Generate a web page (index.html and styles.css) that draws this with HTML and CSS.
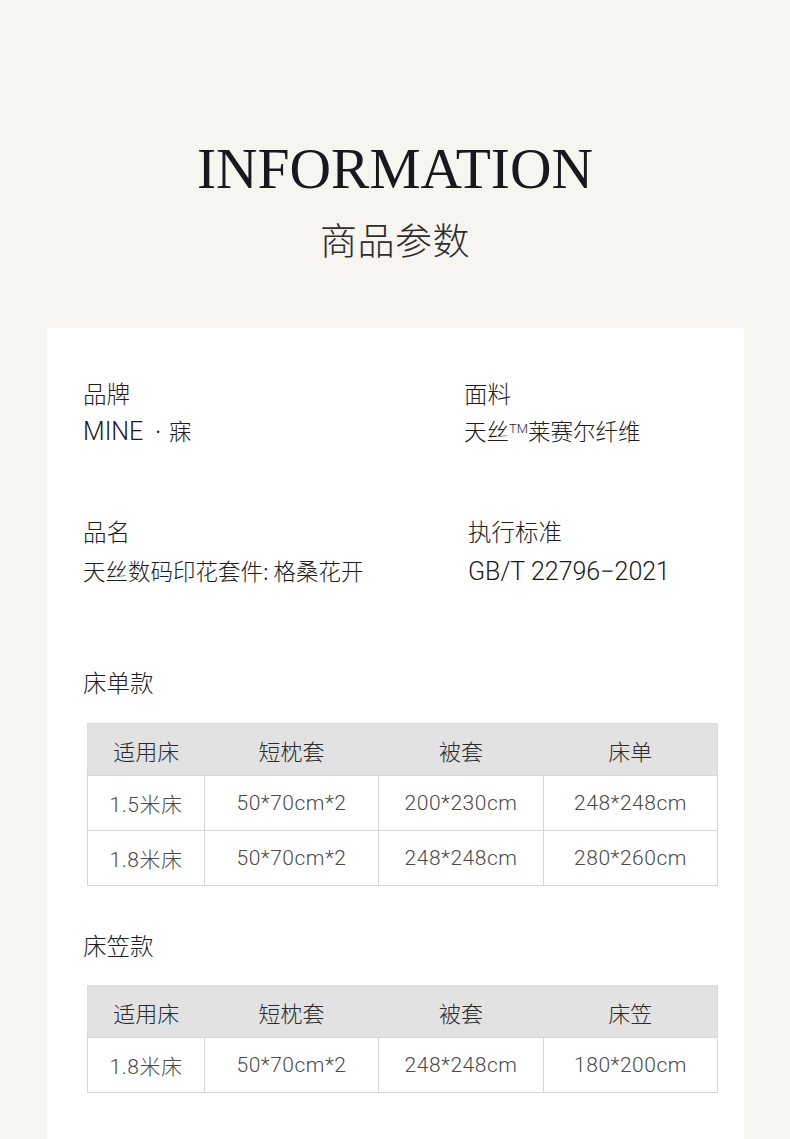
FILE: index.html
```html
<!DOCTYPE html>
<html lang="zh-CN">
<head>
<meta charset="utf-8">
<title>INFORMATION 商品参数</title>
<link rel="stylesheet" href="styles.css">
</head>
<body>
<header class="hero">
  <h1 class="hero-title">INFORMATION</h1>
  <h2 class="hero-sub">商品参数</h2>
</header>
<main class="card">
  <section class="info">
    <div class="info-item">
      <div class="info-label">品牌</div>
      <div class="info-value"><span class="latin">MINE</span><span class="dot">·</span>寐</div>
    </div>
    <div class="info-item">
      <div class="info-label">面料</div>
      <div class="info-value">天丝<span class="tm">TM</span>莱赛尔纤维</div>
    </div>
    <div class="info-item info-item--second">
      <div class="info-label">品名</div>
      <div class="info-value">天丝数码印花套件: 格桑花开</div>
    </div>
    <div class="info-item info-item--second info-item--shift">
      <div class="info-label">执行标准</div>
      <div class="info-value"><span class="latin">GB/T 22796−2021</span></div>
    </div>
  </section>

  <h3 class="section-title section-title--first">床单款</h3>
  <table class="spec">
    <colgroup><col class="c1"><col class="c2"><col class="c3"><col class="c4"></colgroup>
    <thead>
      <tr><th>适用床</th><th>短枕套</th><th>被套</th><th>床单</th></tr>
    </thead>
    <tbody>
      <tr><td>1.5米床</td><td>50*70cm*2</td><td>200*230cm</td><td>248*248cm</td></tr>
      <tr><td>1.8米床</td><td>50*70cm*2</td><td>248*248cm</td><td>280*260cm</td></tr>
    </tbody>
  </table>

  <h3 class="section-title">床笠款</h3>
  <table class="spec">
    <colgroup><col class="c1"><col class="c2"><col class="c3"><col class="c4"></colgroup>
    <thead>
      <tr><th>适用床</th><th>短枕套</th><th>被套</th><th>床笠</th></tr>
    </thead>
    <tbody>
      <tr><td>1.8米床</td><td>50*70cm*2</td><td>248*248cm</td><td>180*200cm</td></tr>
    </tbody>
  </table>
</main>
</body>
</html>
```

FILE: styles.css
```css
* { box-sizing: border-box; }

html, body {
  margin: 0;
  padding: 0;
}

body {
  background: #f6f5f0;
  font-family: "Roboto", "Noto Sans CJK SC", sans-serif;
  color: #222;
  width: 790px;
  min-height: 1139px;
  overflow: hidden;
}

.hero {
  padding-top: 137px;
  text-align: center;
}

.hero-title {
  margin: 0;
  font-family: "Liberation Serif", "Times New Roman", serif;
  font-weight: 400;
  font-size: 57.5px;
  line-height: 64px;
  color: #18181e;
}

.hero-sub {
  margin: 17px 0 0;
  font-family: "Noto Sans CJK SC", sans-serif;
  font-weight: 300;
  font-size: 37px;
  line-height: 42px;
  color: #2e2e2e;
  letter-spacing: 0.5px;
}

.card {
  margin: 68px 46px 0 47px;
  background: #fff;
  padding: 50px 36px 60px;
  min-height: 820px;
}

.info {
  display: grid;
  grid-template-columns: 381px 1fr;
  row-gap: 68px;
}

.info-item--shift {
  padding-left: 4px;
}

.info-item--second .info-value {
  margin-top: 9px;
}

.info-label {
  font-family: "Noto Sans CJK SC", sans-serif;
  font-weight: 300;
  font-size: 23.5px;
  line-height: 30px;
  color: #1e1e1e;
}

.info-value {
  margin-top: 7px;
  font-family: "Noto Sans CJK SC", sans-serif;
  font-weight: 300;
  font-size: 22.5px;
  line-height: 30px;
  color: #1e1e1e;
  white-space: nowrap;
}

.latin {
  font-family: "Roboto", "Noto Sans CJK SC", sans-serif;
  font-weight: 300;
  font-size: 25px;
  color: #1a1a1a;
}

.dot {
  font-family: "Roboto", sans-serif;
  font-weight: 400;
  font-size: 22px;
  margin: 0 8px 0 12px;
}

.tm {
  font-family: "Roboto", sans-serif;
  font-size: 13px;
  vertical-align: 7px;
  line-height: 0;
}

.section-title {
  margin: 44px 0 25px;
  font-family: "Noto Sans CJK SC", sans-serif;
  font-weight: 300;
  font-size: 23.5px;
  line-height: 30px;
  color: #1e1e1e;
}

.section-title--first {
  margin-top: 80px;
  margin-bottom: 26px;
}

.spec {
  margin-left: 4px;
  width: 630px;
  border-collapse: collapse;
  table-layout: fixed;
  border: 1px solid #dcdcdc;
}

.spec .c1 { width: 117px; }
.spec .c2 { width: 174px; }
.spec .c3 { width: 165px; }
.spec .c4 { width: 174px; }

.spec th {
  height: 52px;
  padding: 0;
  background: #e2e2e2;
  font-family: "Noto Sans CJK SC", sans-serif;
  font-weight: 300;
  font-size: 22px;
  color: #2a2a2a;
  text-align: center;
}

.spec td {
  height: 55px;
  padding: 0;
  border: 1px solid #d6d6d6;
  font-family: "Roboto", "Noto Sans CJK SC", sans-serif;
  font-weight: 300;
  font-size: 21px;
  letter-spacing: 0.5px;
  color: #4a4a4a;
  text-align: center;
  white-space: nowrap;
}
```
